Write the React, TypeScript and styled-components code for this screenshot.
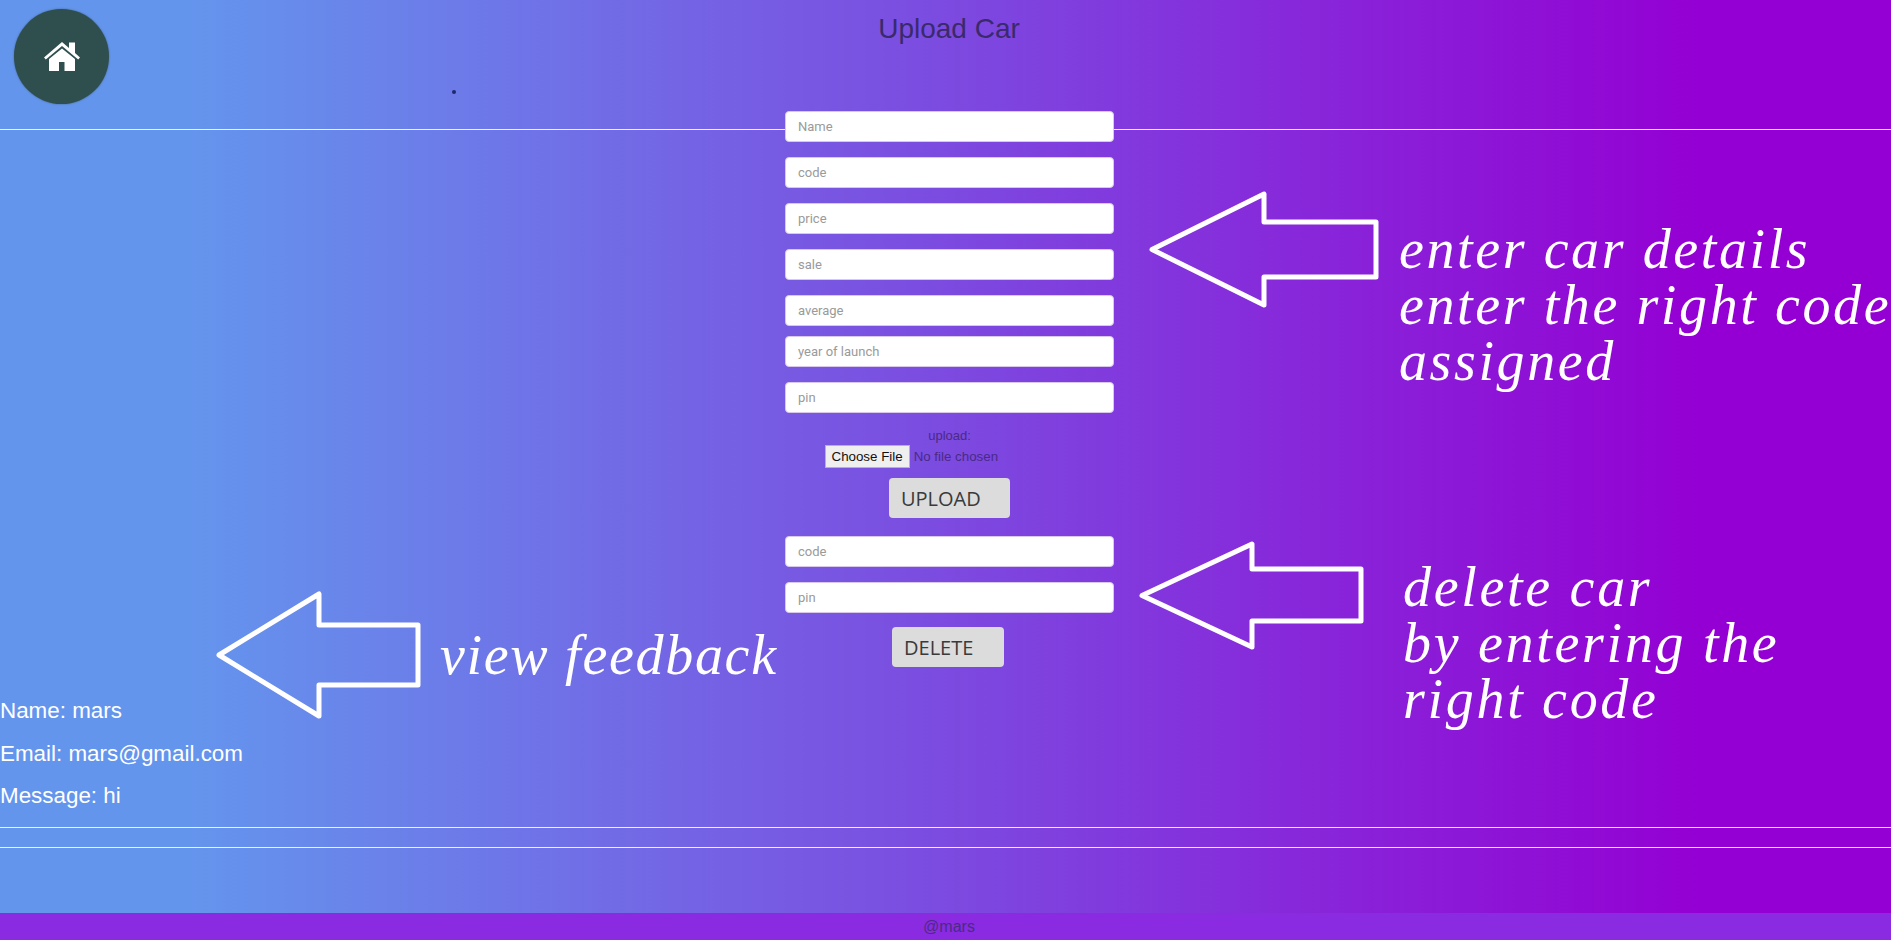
import React from "react";
import styled, { createGlobalStyle } from "styled-components";

const Global = createGlobalStyle`
  html, body { margin: 0; padding: 0; }
  body { font-family: "Liberation Sans", Arial, sans-serif; overflow: hidden; }
  * { box-sizing: border-box; }
`;

const Page = styled.div`
  width: 1891px;
  height: 940px;
  display: flex;
  flex-direction: column;
  background: linear-gradient(to right, #6495ed 10%, #9400d3 90%);
  overflow: hidden;
`;

const Header = styled.header`
  height: 129px;
  display: grid;
  grid-template-columns: 1fr auto 1fr;
`;

const HeaderLeft = styled.div`
  display: flex;
  align-items: flex-start;
`;

const HomeButton = styled.a`
  width: 95px;
  height: 95px;
  margin: 9px 0 0 14px;
  border-radius: 50%;
  background: #2f4f4f;
  box-shadow: 0 0 2px rgba(47, 79, 79, 0.7);
  display: flex;
  align-items: center;
  justify-content: center;
  color: #fff;
`;

const Dot = styled.span`
  width: 4px;
  height: 4px;
  margin: 90px 0 0 343px;
  border-radius: 50%;
  background: #20276e;
`;

const Title = styled.h1`
  margin: 13px 0 0 7px;
  font-size: 28px;
  line-height: 32px;
  font-weight: 400;
  color: #3b2a6b;
`;

const Rule = styled.hr<{ $gap?: number }>`
  width: 100%;
  height: 1px;
  margin: ${(p) => p.$gap ?? 0}px 0 0;
  border: 0;
  background: #f4eef8;
  flex: none;
`;

const Main = styled.main`
  height: 699px;
  margin-top: -19px;
  display: grid;
  grid-template-columns: 785px 329px 1fr;
`;

const LeftColumn = styled.section`
  padding-top: 483px;
`;

const FeedbackCallout = styled.div`
  display: flex;
  align-items: flex-start;
  margin-left: 219px;
`;

const Arrow = styled.svg`
  flex: none;
  display: block;
  overflow: visible;
`;

const Script = styled.p<{ $spacing: number; $left: number; $top: number }>`
  margin: ${(p) => p.$top}px 0 0 ${(p) => p.$left}px;
  font-family: "Liberation Serif", serif;
  font-style: italic;
  font-size: 56px;
  letter-spacing: ${(p) => p.$spacing}px;
  line-height: 56px;
  color: #fff;
  white-space: pre;
`;

const FeedbackList = styled.div`
  margin-top: -18px;
  display: flex;
  flex-direction: column;
  gap: 17px;
`;

const FeedbackLine = styled.p`
  margin: 0;
  font-size: 22.4px;
  line-height: 25.5px;
  color: #fff;
`;

const Form = styled.section`
  display: flex;
  flex-direction: column;
  align-items: center;
`;

const Field = styled.input<{ $gap: number }>`
  width: 329px;
  height: 31px;
  margin-top: ${(p) => p.$gap}px;
  padding: 0 12px;
  flex: none;
  background: #fff;
  border: 1px solid #d9c8ec;
  border-radius: 4px;
  font-family: Roboto, sans-serif;
  font-size: 13px;
  outline: none;
  &::placeholder { color: #9a9a9a; opacity: 1; }
`;

const UploadLabel = styled.label`
  margin-top: 15px;
  font-size: 13px;
  line-height: 15px;
  color: #4a2a85;
`;

const FileInput = styled.input`
  margin-top: 2px;
  width: 250px;
  height: 23px;
  font-family: "Liberation Sans", sans-serif;
  font-size: 13.33px;
  color: #4a2a85;
  &::file-selector-button {
    height: 23px;
    margin-right: 4px;
    padding: 1px 6px;
    background: #efefef;
    border: 1px solid #b5b5b5;
    color: #111;
    font-family: "Liberation Sans", sans-serif;
    font-size: 13.33px;
  }
`;

const ActionButton = styled.button<{ $w: number; $gap: number; $shift: number }>`
  width: ${(p) => p.$w}px;
  height: 40px;
  margin: ${(p) => p.$gap}px 0 0 ${(p) => p.$shift}px;
  padding: 0 0 0 12px;
  text-align: left;
  background: #dcdcdc;
  border: 0;
  border-radius: 4px;
  font-family: "Open Sans", sans-serif;
  font-size: 20px;
  color: #3a3a3a;
`;

const RightColumn = styled.section``;

const Callout = styled.div<{ $top: number; $left: number }>`
  display: flex;
  align-items: flex-start;
  margin: ${(p) => p.$top}px 0 0 ${(p) => p.$left}px;
`;

const Footer = styled.footer`
  margin-top: auto;
  height: 27px;
  padding-left: 7px;
  background: #8a2be2;
  text-align: center;
  font-size: 16px;
  line-height: 27px;
  color: #4a2a85;
`;

const Spacer = styled.div`
  flex: none;
`;

const arrowShape = (w: number, h: number, neckX: number, top: number, bottom: number) =>
  `M${neckX} 0 L${neckX} ${top} L${w} ${top} L${w} ${bottom} L${neckX} ${bottom} L${neckX} ${h} L0 ${h / 2} Z`;

function OutlineArrow({ w, h, neckX, top, bottom }: { w: number; h: number; neckX: number; top: number; bottom: number }) {
  return (
    <Arrow width={w} height={h} viewBox={`0 0 ${w} ${h}`}>
      <path d={arrowShape(w, h, neckX, top, bottom)} fill="none" stroke="#fff" strokeWidth="5" strokeLinejoin="round" />
    </Arrow>
  );
}

function HomeIcon() {
  return (
    <svg width="36" height="29" viewBox="0 0 36 29" fill="currentColor">
      <path d="M18 0 L25 6 L25 0.5 L31 0.5 L31 11 L36 15.5 L34.2 17.5 L18 4 L1.8 17.5 L0 15.5 Z" />
      <path d="M18 6.5 L31 17 L31 29 L20.5 29 L20.5 20 L15 20 L15 29 L5 29 L5 17 Z" />
    </svg>
  );
}

export default function App() {
  return (
    <Page>
      <Global />
      <Header>
        <HeaderLeft>
          <HomeButton href="#">
            <HomeIcon />
          </HomeButton>
          <Dot />
        </HeaderLeft>
        <Title>Upload Car</Title>
        <Spacer />
      </Header>
      <Rule />
      <Main>
        <LeftColumn>
          <FeedbackCallout>
            <OutlineArrow w={199} h={122} neckX={100} top={31} bottom={91} />
            <Script $spacing={1.7} $left={22} $top={33}>view feedback</Script>
          </FeedbackCallout>
          <FeedbackList>
            <FeedbackLine>Name: mars</FeedbackLine>
            <FeedbackLine>Email: mars@gmail.com</FeedbackLine>
            <FeedbackLine>Message: hi</FeedbackLine>
          </FeedbackList>
        </LeftColumn>
        <Form>
          <Field $gap={0} placeholder="Name" />
          <Field $gap={15} placeholder="code" />
          <Field $gap={15} placeholder="price" />
          <Field $gap={15} placeholder="sale" />
          <Field $gap={15} placeholder="average" />
          <Field $gap={10} placeholder="year of launch" />
          <Field $gap={15} placeholder="pin" />
          <UploadLabel>upload:</UploadLabel>
          <FileInput type="file" />
          <ActionButton $w={121} $gap={10} $shift={0}>UPLOAD</ActionButton>
          <Field $gap={18} placeholder="code" />
          <Field $gap={15} placeholder="pin" />
          <ActionButton $w={112} $gap={14} $shift={-3}>DELETE</ActionButton>
        </Form>
        <RightColumn>
          <Callout $top={83} $left={38}>
            <OutlineArrow w={224} h={111} neckX={112} top={28} bottom={83} />
            <Script $spacing={2.6} $left={23} $top={27}>{"enter car details\nenter the right code\nassigned"}</Script>
          </Callout>
          <Callout $top={155} $left={28}>
            <OutlineArrow w={219} h={103} neckX={110} top={25} bottom={77} />
            <Script $spacing={2.7} $left={42} $top={15}>{"delete car\nby entering the\nright code"}</Script>
          </Callout>
        </RightColumn>
      </Main>
      <Rule $gap={17} />
      <Rule $gap={19} />
      <Footer>@mars</Footer>
    </Page>
  );
}
